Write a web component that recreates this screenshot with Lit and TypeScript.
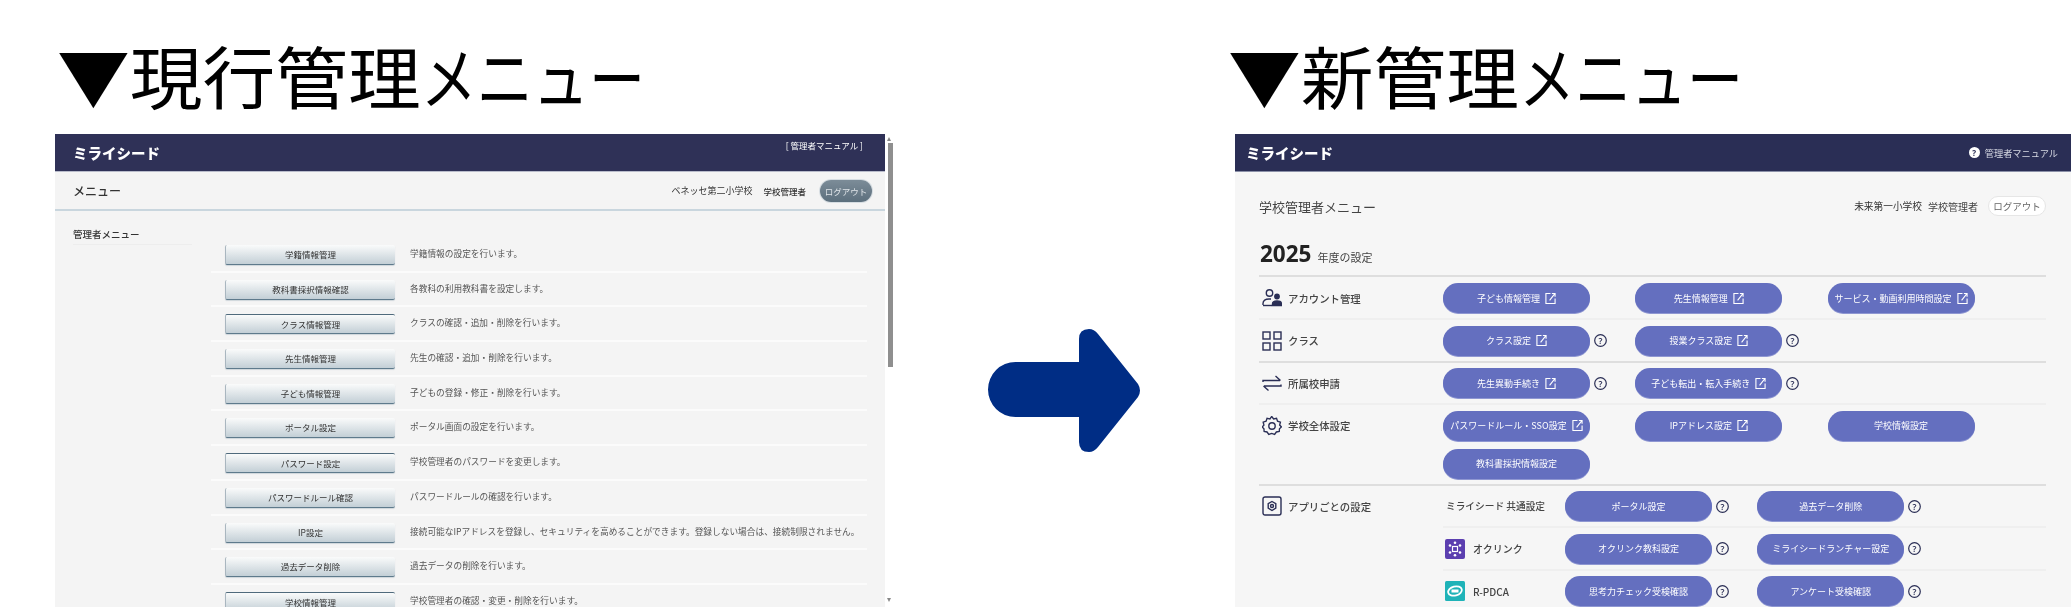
import { LitElement, html, css, svg } from "lit";
import { customElement } from "lit/decorators.js";

const oldRows: [string, string, boolean?][] = [
  ["学籍情報管理", "学籍情報の設定を行います。"],
  ["教科書採択情報確認", "各教科の利用教科書を設定します。"],
  ["クラス情報管理", "クラスの確認・追加・削除を行います。", true],
  ["先生情報管理", "先生の確認・追加・削除を行います。"],
  ["子ども情報管理", "子どもの登録・修正・削除を行います。"],
  ["ポータル設定", "ポータル画面の設定を行います。"],
  ["パスワード設定", "学校管理者のパスワードを変更します。", true],
  ["パスワードルール確認", "パスワードルールの確認を行います。"],
  ["IP設定", "接続可能なIPアドレスを登録し、セキュリティを高めることができます。登録しない場合は、接続制限されません。"],
  ["過去データ削除", "過去データの削除を行います。"],
  ["学校情報管理", "学校管理者の確認・変更・削除を行います。", true],
];

type Btn = { t: string; ext?: boolean; help?: boolean };

const ic = (body: unknown) => html`<svg class="ic" viewBox="0 0 20 20" fill="none" stroke="#2a2e55" stroke-width="1.4">${body}</svg>`;

const icons = {
  account: ic(svg`<circle cx="7.5" cy="5" r="3.2"/><path d="M1 17v-1.5C1 12.5 3.5 11 7 11h2"/><path d="M1 17.5h9"/><circle cx="15" cy="8.5" r="2.2" fill="#2a2e55"/><path d="M10.5 17.5v-1.5c0-2 2-3 4.5-3s4.500 1 4.500 3v1.500z" fill="#2a2e55"/>`),
  grid: ic(svg`<rect x="1" y="1" width="7" height="7"/><rect x="12" y="1" width="7" height="7"/><rect x="1" y="12" width="7" height="7"/><rect x="12" y="12" width="7" height="7"/>`),
  transfer: ic(svg`<path d="M1 9V7.500h17M13.500 3l5 4.500"/><path d="M19 11.500v1.500H2M6.500 17.500L1.500 13"/>`),
  gear: ic(svg`<path d="M10 1l2 2.500 3-.7 1 3 3 1-.8 3 1.800 2-2 2-.2 2.700-3 .5-1.800 2.500-3-1-3 1-1.800-2.500-3-.5-.2-2.700-1.800-2 1.800-2-.800-3 3-1 1-3 3 .7z" transform="translate(0 -.5) scale(.97)"/><circle cx="10" cy="10" r="3.200"/>`),
  app: ic(svg`<rect x="1" y="1" width="18" height="18" rx="2"/><path d="M10 5.500l3.800 2.200v4.500L10 14.500l-3.800-2.300V7.700z"/><circle cx="10" cy="10" r="1.500"/>`),
};

const ext = html`<svg class="ext" viewBox="0 0 12 14" fill="none" stroke="#fff" stroke-width="1.200"><path d="M6 1.500H1v11h10V7"/><path d="M5 9l6-7.500M7.500 1.500H11v3.500"/></svg>`;
const help = html`<svg class="help" viewBox="0 0 13 13"><circle cx="6.500" cy="6.500" r="5.800" fill="none" stroke="#2a2e55" stroke-width="1.200"/><text x="6.500" y="9.500" text-anchor="middle" font-size="8.500" font-weight="600" fill="#2a2e55" font-family="Noto Sans">?</text></svg>`;

const cell = (b: Btn) => html`<div class="cell"><div class="pill">${b.t}${b.ext ? ext : ""}</div>${b.help ? help : ""}</div>`;

const rows: { icon: unknown; label: string; btns: Btn[]; light: boolean }[] = [
  { icon: icons.account, label: "アカウント管理", light: true, btns: [{ t: "子ども情報管理", ext: true }, { t: "先生情報管理", ext: true }, { t: "サービス・動画利用時間設定", ext: true }] },
  { icon: icons.grid, label: "クラス", light: false, btns: [{ t: "クラス設定", ext: true, help: true }, { t: "授業クラス設定", ext: true, help: true }] },
  { icon: icons.transfer, label: "所属校申請", light: true, btns: [{ t: "先生異動手続き", ext: true, help: true }, { t: "子ども転出・転入手続き", ext: true, help: true }] },
  { icon: icons.gear, label: "学校全体設定", light: false, btns: [{ t: "パスワードルール・SSO設定", ext: true }, { t: "IPアドレス設定", ext: true }, { t: "学校情報設定" }, { t: "教科書採択情報設定" }] },
];

const okulink = html`<svg class="ic" viewBox="0 0 20 20"><rect width="20" height="20" rx="2" fill="#5c3fb0"/><g fill="#fff"><rect x="7.500" y="7.500" width="5" height="5" fill="none" stroke="#fff" stroke-width="1.200"/><circle cx="10" cy="3.800" r="1.300"/><circle cx="15" cy="6.500" r="1.300"/><circle cx="15" cy="13.500" r="1.300"/><circle cx="10" cy="16.200" r="1.300"/><circle cx="5" cy="13.500" r="1.300"/><circle cx="5" cy="6.500" r="1.300"/></g></svg>`;
const rpdca = html`<svg class="ic" viewBox="0 0 20 20"><rect width="20" height="20" rx="1.500" fill="#1fb3b8"/><ellipse cx="10" cy="10" rx="7" ry="4.500" fill="none" stroke="#fff" stroke-width="1.800" transform="rotate(-15 10 10)"/><rect x="6.500" y="8.500" width="7" height="3" fill="#fff"/></svg>`;

const apps: { icon?: unknown; label: string; btns: Btn[] }[] = [
  { label: "ミライシード 共通設定", btns: [{ t: "ポータル設定", help: true }, { t: "過去データ削除", help: true }] },
  { icon: okulink, label: "オクリンク", btns: [{ t: "オクリンク教科設定", help: true }, { t: "ミライシードランチャー設定", help: true }] },
  { icon: rpdca, label: "R-PDCA", btns: [{ t: "思考力チェック受検確認", help: true }, { t: "アンケート受検確認", help: true }] },
];

@customElement("app-root")
export class AppRoot extends LitElement {
  static styles = css`
    :host { display: block; width: 2071px; height: 607px; overflow: hidden; background: #fff; font-family: "Noto Sans CJK JP", "Noto Sans", sans-serif; }
    .root { display: flex; height: 607px; padding-left: 55px; box-sizing: border-box; overflow: hidden; }
    .section { display: flex; flex-direction: column; height: 607px; }
    .section.old { width: 838px; flex: none; }
    .section.new { flex: 1; min-width: 0; }
    h1 { margin: 0; height: 134px; flex: none; box-sizing: border-box; padding-top: 31px; font-size: 68px; line-height: 88px; font-weight: 400; color: #000; white-space: nowrap; transform: scaleX(1.07); transform-origin: left center; filter: blur(0.3px); }
    .kana { display: inline-block; transform: scaleX(0.77); transform-origin: left center; }
    .old h1 { margin-left: 2px; }
    .new h1 { margin-left: -7px; }
    .arrow { flex: none; width: 152px; height: 123px; margin: 329px 95px 0; }

    .frame { display: flex; flex: 1; min-height: 0; filter: blur(0.5px); overflow: hidden; }
    .main { flex: 1; min-width: 0; background: #f4f4f4; overflow: hidden; }
    .bar { height: 37px; border-bottom: 1px solid #b9bccb; background: #2f3157; display: flex; justify-content: space-between; color: #fff; box-sizing: content-box; }
    .logo { font-size: 14.500px; font-weight: 900; line-height: 37px; color: #fff; }
    .old .logo { margin-left: 18px; }
    .oldman { font-size: 8.500px; line-height: 22px; margin-right: 22px; }
    .sub { height: 37px; border-bottom: 2px solid #c9d6de; display: flex; align-items: center; padding: 0 13px 0 18px; font-size: 8.500px; color: #333; }
    .subt { font-size: 12px; font-weight: 500; flex: 1; }
    .school { margin-right: 11px; font-size: 9px; }
    .role { font-weight: 500; margin-right: 14px; }
    .oldout { width: 52px; height: 22px; border-radius: 11px; background: linear-gradient(#7c8c98, #5c6f7d); color: #dfe4e8; text-align: center; line-height: 22px; box-shadow: 0 0 0 1px #d6dde2; }
    .oldbody { display: grid; grid-template-columns: 156px 656px; padding-top: 0; }
    .mt { margin: 16px 0 0 18px; width: 119px; height: 17px; border-bottom: 1px solid #ededed; font-size: 9.500px; font-weight: 500; line-height: 14px; color: #333; }
    .rows { padding-top: 27px; }
    .orow { height: 34.700px; box-sizing: border-box; border-bottom: 2px solid #fbfbfb; display: flex; align-items: flex-start; padding: 7px 0 0 14px; }
    .obtn { width: 170px; height: 20px; flex: none; box-sizing: border-box; border-radius: 2px; background: linear-gradient(#fafbfb, #c3cfd6); border-bottom: 1px solid #5e7a8c; border-left: 1px solid #a9b6bf; box-shadow: 0 1px 1px #cfd6db; font-size: 8.500px; text-align: center; line-height: 19px; color: #333; }
    .obtn.hi { border-top: 1.500px solid #4f6a7c; }
    .otxt { margin-left: 15px; font-size: 8.700px; line-height: 17px; color: #555; white-space: nowrap; }
    .sb { width: 8px; flex: none; background: #fff; display: flex; flex-direction: column; align-items: center; position: relative; }
    .thumb { width: 5px; height: 224px; margin: 9px 0 0 3px; background: #8f8f8f; }
    .up, .down { width: 0; height: 0; border-left: 2.500px solid transparent; border-right: 2.500px solid transparent; position: absolute; left: 2px; }
    .up { top: 3px; border-bottom: 4px solid #888; }
    .down { top: 464px; border-top: 4px solid #888; }

    .new .main { background: #f6f6f6; }
    .new .bar { background: #2a2e55; border-bottom-color: #8b90a8; padding-right: 13px; }
    .new .logo { margin-left: 11px; }
    .man { display: flex; align-items: center; gap: 5px; font-size: 9.200px; color: #d7d9e3; }
    .qm { width: 11px; height: 11px; border-radius: 50%; background: #fff; color: #2a2e55; font-size: 8px; line-height: 11px; text-align: center; font-weight: 700; font-family: "Noto Sans", sans-serif; }
    .page { padding: 24px 25px 0 24px; color: #333; }
    .top { display: flex; align-items: center; height: 20px; }
    .ttl { flex: 1; font-size: 13px; color: #444; }
    .t2 { font-size: 9.700px; color: #333; margin-right: 6px; white-space: nowrap; }
    .t3 { font-size: 10px; color: #444; margin-right: 10px; }
    .logout { width: 58px; height: 20px; box-sizing: border-box; border: 1px solid #e6e6e6; border-radius: 10px; background: #fff; font-size: 9.500px; line-height: 18px; text-align: center; color: #666; }
    .year { display: flex; align-items: baseline; gap: 6px; height: 34px; margin-top: 25px; padding-left: 1px; border-bottom: 2px solid #dedede; box-sizing: content-box; }
    .num { font-family: "Noto Sans", sans-serif; font-weight: 700; font-size: 22.500px; line-height: 25px; color: #222; }
    .yl { font-size: 11px; color: #444; }
    .row { display: flex; padding: 5.250px 0; border-bottom: 2px solid #dedede; }
    .row.light { border-bottom-color: #efefef; }
    .row.first { padding-top: 6px; }
    .lab { width: 184px; flex: none; height: 30px; display: flex; align-items: center; gap: 6px; padding-left: 3px; box-sizing: border-box; font-size: 10.400px; font-weight: 500; color: #444; }
    .ic { width: 20px; height: 20px; flex: none; }
    .btns { flex: 1; display: flex; flex-wrap: wrap; row-gap: 8px; }
    .cell { width: 192.300px; display: flex; align-items: center; gap: 4px; height: 30px; flex: none; }
    .pill { width: 147px; height: 30px; flex: none; border-radius: 15px; background: #646fbf; box-shadow: 0 1px 0 #8f97d2; color: #fff; font-size: 9px; display: flex; align-items: center; justify-content: center; gap: 5px; white-space: nowrap; }
    .ext { width: 11px; height: 13px; flex: none; }
    .help { width: 13px; height: 13px; flex: none; }
    .apps { flex: 1; min-width: 0; margin-top: -5.250px; }
    .sr { display: flex; padding: 5.250px 0; border-bottom: 2px solid #efefef; }
    .srl { width: 122px; flex: none; height: 30px; display: flex; align-items: center; gap: 8px; padding-left: 2px; box-sizing: border-box; font-size: 10px; font-weight: 500; color: #444; white-space: nowrap; }
    .srl.plain { font-size: 9.700px; padding-left: 3px; }
    .appbtns { display: flex; }
  `;

  render() {
    return html`<div class="root">
      <section class="section old">
        <h1>▼現行管理<span class="kana">メニュー</span></h1>
        <div class="frame">
          <div class="main">
            <div class="bar"><span class="logo">ミライシード</span><span class="oldman">[ 管理者マニュアル ]</span></div>
            <div class="sub"><span class="subt">メニュー</span><span class="school">ベネッセ第二小学校</span><span class="role">学校管理者</span><span class="oldout">ログアウト</span></div>
            <div class="oldbody">
              <div class="mt">管理者メニュー</div>
              <div class="rows">
                ${oldRows.map(([b, t, hi]) => html`<div class="orow"><div class="obtn ${hi ? "hi" : ""}">${b}</div><div class="otxt">${t}</div></div>`)}
              </div>
            </div>
          </div>
          <div class="sb"><span class="up"></span><div class="thumb"></div><span class="down"></span></div>
        </div>
      </section>
      <svg class="arrow" viewBox="0 0 152 123"><path fill="#002d85" d="M27.500 33H91V10Q91 0 101 0Q106 0 110 5L150 55Q154 61.500 150 68L110 118Q106 123 101 123Q91 123 91 113V88H27.500A27.500 27.500 0 0 1 27.500 33Z"/></svg>
      <section class="section new">
        <h1>▼新管理<span class="kana">メニュー</span></h1>
        <div class="frame">
          <div class="main">
            <div class="bar"><span class="logo">ミライシード</span><span class="man"><span class="qm">?</span>管理者マニュアル</span></div>
            <div class="page">
              <div class="top"><span class="ttl">学校管理者メニュー</span><span class="t2">未来第一小学校</span><span class="t3">学校管理者</span><span class="logout">ログアウト</span></div>
              <div class="year"><span class="num">2025</span><span class="yl">年度の設定</span></div>
              ${rows.map((r, i) => html`<div class="row ${r.light ? "light" : ""} ${i === 0 ? "first" : ""}"><div class="lab">${r.icon}${r.label}</div><div class="btns">${r.btns.map(cell)}</div></div>`)}
              <div class="row">
                <div class="lab">${icons.app}アプリごとの設定</div>
                <div class="apps">
                  ${apps.map((a) => html`<div class="sr"><div class="srl ${a.icon ? "" : "plain"}">${a.icon ?? ""}${a.label}</div><div class="appbtns">${a.btns.map(cell)}</div></div>`)}
                </div>
              </div>
            </div>
          </div>
        </div>
      </section>
    </div>`;
  }
}
